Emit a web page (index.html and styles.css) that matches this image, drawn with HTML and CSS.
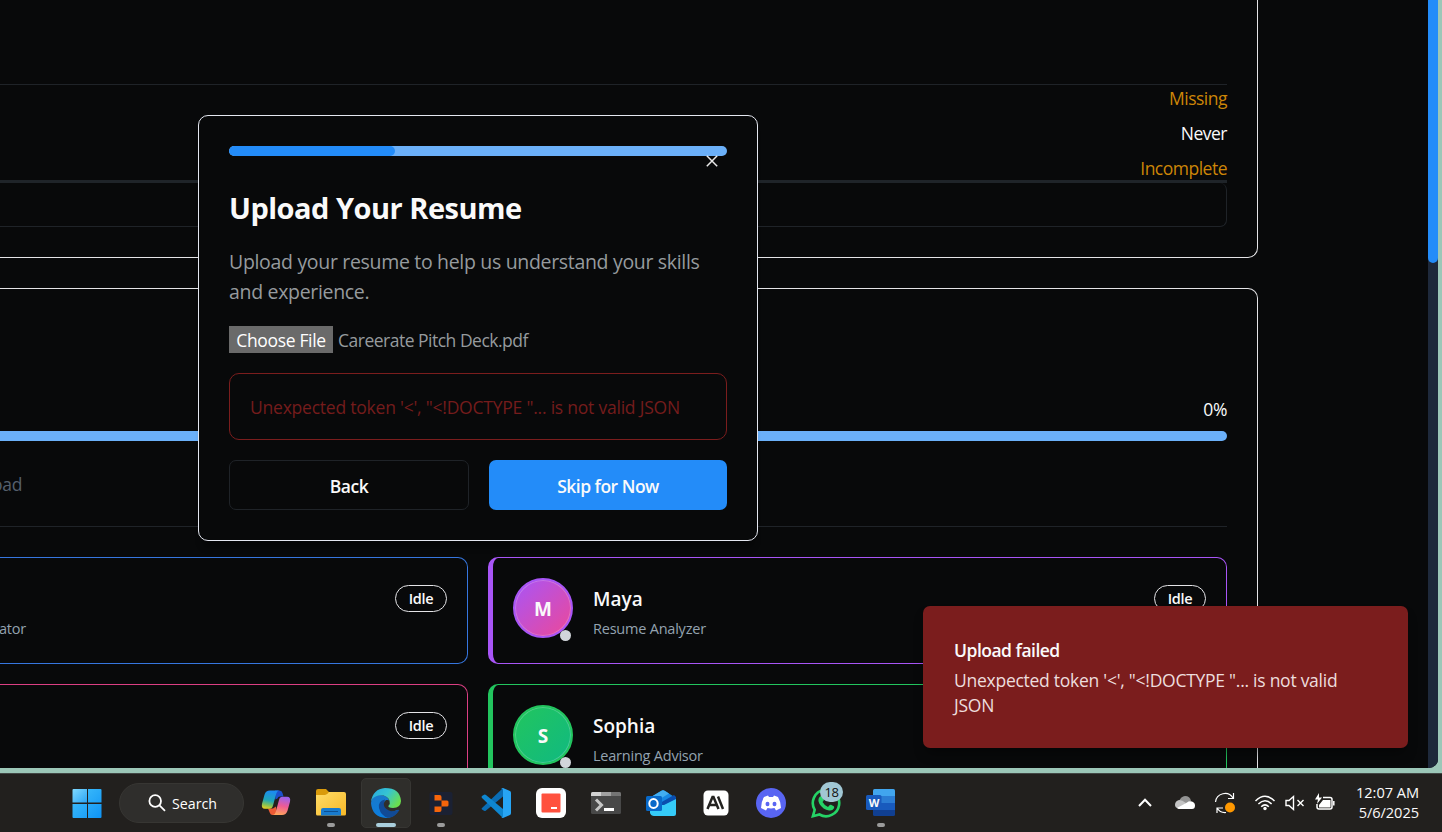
FILE: index.html
```html
<!DOCTYPE html>
<html lang="en">
<head>
<meta charset="utf-8">
<title>Careerate</title>
<link rel="stylesheet" href="styles.css">
</head>
<body>
<div class="desktop">
  <div class="browser">
    <main class="page">
      <section class="card card-profile">
        <div class="rows">
          <div class="row warn missing">Missing</div>
          <div class="row never">Never</div>
          <div class="row warn incomplete">Incomplete</div>
        </div>
        <div class="outline-box"></div>
      </section>
      <section class="card card-agents">
        <div class="percent">0%</div>
        <div class="track"></div>
        <div class="hint"><span>oad</span></div>
        <div class="agents">
          <article class="agent left blue"><p class="cut-role">ator</p><span class="badge">Idle</span></article>
          <article class="agent purple">
            <div class="avatar">M<i class="status"></i></div>
            <div class="who"><h3 class="maya">Maya</h3><p class="ra">Resume Analyzer</p></div>
            <span class="badge">Idle</span>
          </article>
          <article class="agent left pink"><span class="badge">Idle</span></article>
          <article class="agent green">
            <div class="avatar">S<i class="status"></i></div>
            <div class="who"><h3 class="sophia">Sophia</h3><p class="la">Learning Advisor</p></div>
            <span class="badge">Idle</span>
          </article>
        </div>
      </section>
    </main>
    <div class="scrollbar"><div class="thumb"></div></div>

    <div class="modal">
      <div class="progress"><div class="progress-fill"></div></div>
      <svg class="close" viewBox="0 0 20 20"><path d="M4.8 4.8 15.2 15.2M15.2 4.8 4.8 15.2"/></svg>
      <h2><span>Upload Your Resume</span></h2>
      <p class="desc"><span class="d1">Upload your resume to help us understand your skills</span><br><span class="d2">and experience.</span></p>
      <div class="file"><span class="choose">Choose File</span><span class="filename">Careerate Pitch Deck.pdf</span></div>
      <div class="error">Unexpected token '&lt;', "&lt;!DOCTYPE "... is not valid JSON</div>
      <div class="actions"><div class="btn back">Back</div><div class="btn skip">Skip for Now</div></div>
    </div>

    <div class="toast">
      <strong>Upload failed</strong>
      <p>Unexpected token '&lt;', "&lt;!DOCTYPE "... is not valid<br>JSON</p>
    </div>
  </div>

  <footer class="taskbar">
    <div class="apps">
      <div class="cell start"><svg viewBox="0 0 30 30"><defs><linearGradient id="win" x1="0" y1="0" x2="1" y2="1"><stop offset="0" stop-color="#7fd9ff"/><stop offset="1" stop-color="#2ba5f5"/></linearGradient><linearGradient id="win2" x1="0" y1="0" x2="1" y2="1"><stop offset="0" stop-color="#45c3fc"/><stop offset="1" stop-color="#0e93f5"/></linearGradient></defs><path fill="url(#win)" d="M1.5 1h13.5v13.6H.5V2q0-1 1-1z"/><path fill="url(#win2)" d="M16 1h12.5q1 0 1 1v12.6H16zM.5 16H15v14H1.500q-1 0-1-1zM16 16h13.500v13q0 1-1 1H16z"/></svg></div>
      <div class="search"><svg viewBox="0 0 18 18"><circle cx="7.200" cy="7" r="5.800"/><path d="m11.500 11.400 5.500 5.500"/></svg><span>Search</span></div>
      <div class="cell copilot"><svg viewBox="0 0 30 30"><defs><linearGradient id="co1" x1=".3" y1="0" x2=".1" y2="1"><stop offset="0" stop-color="#1c8cf0"/><stop offset=".5" stop-color="#1fa6b8"/><stop offset=".75" stop-color="#7cbf5b"/><stop offset="1" stop-color="#f3d11b"/></linearGradient><linearGradient id="co2" x1=".6" y1="0" x2=".4" y2="1"><stop offset="0" stop-color="#9a62ee"/><stop offset=".5" stop-color="#ee5b94"/><stop offset="1" stop-color="#ffa45b"/></linearGradient></defs><path fill="#1d50cc" d="M14 2.500h4.500q2.500 0 3 2.500l1 3.500H19q-2 0-2.600 2l-2 1z"/><path fill="#ec5a35" d="M7 20.500h5l3-2 1 8.500h-4.500q-2 0-2.600-2z"/><path fill="url(#co1)" d="M9 2.500h9q-2 .3-2.700 3L12 17.500q-.8 3.200-3.500 3.200H4q-4 0-3-5l2.500-9Q4.800 2.500 9 2.500z"/><path fill="url(#co2)" d="M21 27h-9q2-.3 2.700-3L18 12q.8-3.200 3.500-3.200H26q4 0 3 5l-2.500 9Q25.200 27 21 27z"/></svg></div>
      <div class="cell"><svg viewBox="0 0 30 30"><defs><linearGradient id="fo" x1="0" y1="0" x2="1" y2="1"><stop offset="0" stop-color="#ffdc68"/><stop offset="1" stop-color="#f7b827"/></linearGradient></defs><path fill="#d99a0b" d="M2 1h8l3 3h1v5H0V3q0-2 2-2z"/><path fill="url(#fo)" d="M0 7h9q2 0 4-3h15q2 0 2 2v20q0 1.500-1.500 1.500h-27Q0 27.500 0 26z"/><path fill="#187bce" d="M5 27.500V22q0-2 2-2h16q2 0 2 2v5.500z"/><path stroke="#0c4f91" d="M8 23.500h14"/></svg><i class="dot"></i></div>
      <div class="cell active"><svg viewBox="0 0 30 30"><defs><linearGradient id="ed1" x1="0" y1=".1" x2="1" y2=".6"><stop offset="0" stop-color="#27a9e0"/><stop offset=".5" stop-color="#36c4d2"/><stop offset="1" stop-color="#6be04c"/></linearGradient><linearGradient id="ed2" x1="0" y1="0" x2=".3" y2="1"><stop offset="0" stop-color="#1b78c8"/><stop offset="1" stop-color="#0a7ee0"/></linearGradient></defs><path fill="url(#ed2)" d="M0 15Q1 7 9 7q7 .5 9 5l-1 7 11 3Q23 30 15 30 1 29 0 15z"/><path fill="#114a96" d="M14 11.500q-7 1-6 8.500 2 8 9 9.800Q24 29.500 28.300 22.300q-.3-.8-1.300-.3-6 2.500-10.500-.5-5-4-2.500-10z"/><path fill="#2f2e2b" d="M15 12q-3.500 3-1.500 7 3.500 5 10 4l5-2 1.500-3.500q-7 3.500-12 .8-1-.8 0-2.300 1-2-.5-4z"/><path fill="url(#ed1)" d="M0 13.500Q2 1 14 0q15 0 16 13-.3 7-8 7-5.500-.3-4.500-2.300 2-2 1-5Q16.500 7 9 7.200 2 8 0 13.500z"/></svg><i class="dot wide"></i></div>
      <div class="cell"><svg viewBox="0 0 30 30"><rect x="3.500" y="4" width="23" height="23" rx="2" fill="#1b2133"/><path fill="#f5650b" d="M8.500 7h5q2 0 2 2v3.500h-7zM15.500 12.500H21q1.500 0 1.500 1.500v3q0 1.500-1.500 1.500h-5.500zM8.500 18.500h7V22q0 2-2 2h-5z"/></svg><i class="dot"></i></div>
      <div class="cell"><svg viewBox="0 0 30 30"><path fill="#0a6db5" d="m1 20 21-20v8.500L5 22.500q-1 1-2 .2L1 21.500q-1-.8 0-1.500z"/><path fill="#0e86d0" d="M1 10q-1-1 0-2l2-1.300q1-.5 2 .2L22 21v9z"/><path fill="#27a5f5" d="m22 0 7 3q1 .5 1 2v20q0 1.500-1 2l-7 3q-1 0-2-1 2 1 2-1V2q0-2-2-1 1-1 2-1z"/></svg></div>
      <div class="cell"><svg viewBox="0 0 30 30"><rect width="30" height="30" rx="6" fill="#fff"/><rect x="5.500" y="5.500" width="19" height="19" rx="1" fill="#ff513e"/><path stroke="#fff" stroke-width="2" d="M15 20h6"/></svg></div>
      <div class="cell"><svg viewBox="0 0 30 30"><rect y="4" width="30" height="22" rx="1.500" fill="#484848"/><path fill="#d3d3d3" d="M1.500 4H10v4H0V5.500Q0 4 1.500 4z"/><path fill="#a1a1a1" d="M10 4h10v4H10z"/><path fill="#747474" d="M20 4h8.500Q30 4 30 5.500V8H20z"/><path fill="none" stroke="#c6c6c6" stroke-width="3" d="m5 11.500 5.500 5.500L5 22.500"/><path stroke="#fff" stroke-width="3" d="M13 21.500h10"/></svg></div>
      <div class="cell"><svg viewBox="0 0 30 30"><path fill="#1788e4" d="m5 9 10-6q2-1.500 4 0l11 7-15 10L5 17z"/><path fill="#42aef2" d="M5 9 15 3q2-1.500 4 0l4 2.500L9 14z"/><path fill="#0a4eaf" d="m14 15 14-8 2 2v3L18 19h-4z"/><path fill="#35cbf8" d="M4 17h14l12-6v15q0 2-2 2H8q-3 0-4-3z"/><rect y="8" width="16" height="15" rx="1.500" fill="#0869c9"/><ellipse cx="7.500" cy="15.500" rx="4.200" ry="4.500" fill="none" stroke="#fff" stroke-width="2"/></svg></div>
      <div class="cell"><svg viewBox="0 0 30 30"><rect x="2.500" y="2.500" width="25" height="25" rx="4.500" fill="#fff"/><path fill="none" stroke="#242321" stroke-width="2.500" d="m6.500 21 5-12h1l5 12M8.500 17h7M17 8.500 22 21"/></svg></div>
      <div class="cell"><svg viewBox="0 0 30 30"><circle cx="15" cy="15" r="15" fill="#5965f2"/><path fill="#fff" d="m8 9 4-1.500 1 1.500h4l1-1.500L22 9q3 5 3 11l-5 2.500-1.500-2.500q-3.500.8-7 0L10 22.500 5 20Q5 14 8 9z"/><ellipse cx="11.500" cy="16" rx="2" ry="2.300" fill="#5965f2"/><ellipse cx="18.500" cy="16" rx="2" ry="2.300" fill="#5965f2"/></svg></div>
      <div class="cell"><svg viewBox="0 0 30 30"><path fill="none" stroke="#25d366" stroke-width="2.600" d="M1.900 28.200 3.700 21.800A13.200 13.200 0 1 1 8.500 26.500z"/><path fill="#25d366" d="M9 8.500q1.500-1 2.500 0l1.300 3q.3 1-1.300 2.500 2 3.500 5.500 5l1.500-1.800q.7-.8 1.500-.4l2.800 1.400q.7.500.2 2-1.500 2.800-5 2.300Q12 21.500 8.500 16 6 11.500 9 8.500z"/></svg><b class="count">18</b></div>
      <div class="cell"><svg viewBox="0 0 30 30"><path fill="#41a5ee" d="M8.500 1h19q1.500 0 1.500 1.500V8H7V2.500Q7 1 8.500 1z"/><path fill="#2b7cd3" d="M7 8h22v7H7z"/><path fill="#185abd" d="M7 15h22v7H7z"/><path fill="#103f91" d="M7 22h22v4.500q0 1.500-1.500 1.500h-19Q7 28 7 26.500z"/><rect y="7" width="15.500" height="15" rx="1.500" fill="#185abd"/></svg><b class="wletter">W</b><i class="dot"></i></div>
    </div>
    <div class="tray">
      <svg class="ti" viewBox="0 0 20 20"><path d="m4 13 6-6.300 6 6.300" stroke-width="2"/></svg>
      <svg class="ti" viewBox="0 0 20 20"><path stroke="none" fill="#939393" d="M4 8q2-4.500 6-5 5 0 6 5l-7 5z"/><path stroke="none" fill="#c4c4c4" d="M0 12q0-4 4-5 3 0 7 3l-7 5.500Q0 15 0 12z"/><path stroke="none" fill="#fff" d="m2 15 10-5.500q2-2 5-1 3 1 3 4 0 3.500-3 3.500H4q-1 0-2-1z"/></svg>
      <svg class="ti" viewBox="0 0 20 20"><path stroke-width="1.200" d="M.500 9A9.500 9.500 0 0 1 18 5M18.500 0v5.500H13M2 20v-5h6M2 15q3 5 9 4.500"/><circle cx="15" cy="14.500" r="5" fill="#ff9800" stroke="none"/></svg>
      <svg class="ti" viewBox="0 0 20 20"><path stroke-width="1.500" d="M.5 8q9.500-9.500 19 0M3.400 11q6.600-6.500 13.200 0M6.200 13.800q3.800-3.800 7.600 0"/><circle cx="10" cy="15.500" r="1.700" fill="#fff" stroke="none"/></svg>
      <svg class="ti vol" viewBox="0 0 20 20"><path stroke-width="1.400" d="M1 7.500h3L8.500 3.500v13L4 12.500H1zM12.500 7l6 6M18.500 7l-6 6"/></svg>
      <svg class="ti" viewBox="0 0 20 20"><path stroke-width="1.500" d="M8 4.500h7q2 0 2 2V14q0 2-2 2H4q-2 0-2-2v-3M18.800 8v4.500"/><path fill="#fff" stroke="none" d="M8 7h7.500v7.500H4V12zM4 0 0 6.500h3L2 11l5-6.500H4z"/></svg>
      <div class="clock"><span class="time">12:07 AM</span><span class="date">5/6/2025</span></div>
    </div>
  </footer>
</div>
</body>
</html>
```
FILE: styles.css
```css
* { box-sizing: border-box; }
body { margin: 0; background: #9cc7b8; font-family: "Open Sans", "Noto Sans", sans-serif; color: #fafafa; }
h2, h3, p { margin: 0; }
.desktop { width: 1442px; height: 832px; overflow: hidden; display: flex; flex-direction: column; gap: 5px; }
.browser { position: relative; width: 1438px; height: 768px; flex: none; display: flex; background: #08090a; border-bottom-right-radius: 9px; overflow: hidden; }
.page { width: 1428px; display: flex; flex-direction: column; gap: 30px; }
.scrollbar { width: 10px; background: #1e293b; }
.thumb { height: 263px; background: #238cf9; border-radius: 0 0 5px 5px; }

.card { width: 1258px; border: 1px solid #e4e4e7; border-left: 0; flex: none; }
.card-profile { height: 258px; border-top: 0; border-bottom-right-radius: 10px; padding: 84px 30px 0 0; }
.rows { height: 99px; border-top: 1px solid #1f2328; border-bottom: 3px solid #1f2429; padding-top: 1px; display: flex; flex-direction: column; gap: 10px; }
.row { height: 25px; flex: none; line-height: 25px; font-size: 17.5px; text-align: right; letter-spacing: -.5px; }
.warn { color: #cd8607; }
.outline-box { height: 44px; border: 1px solid #1f2328; border-left: 0; border-top: 0; border-radius: 0 7px 7px 0; }
.card-agents { height: 520px; border-top-right-radius: 10px; padding: 108px 30px 0 0; }
.percent { height: 25px; line-height: 24px; font-size: 17.5px; text-align: right; letter-spacing: -.4px; }
.track { height: 10px; margin-top: 9px; border-radius: 0 5px 5px 0; background: #6bb0f9; }
.hint { height: 86px; margin-bottom: 30px; padding-top: 31px; line-height: 25px; font-size: 17.5px; color: #55606d; border-bottom: 1px solid #1f2328; letter-spacing: -.3px; }
.hint span { display: block; margin-left: -8px; }
.agents { display: grid; grid-template-columns: 468px 739px; gap: 20px; }
.agent { height: 107px; display: flex; align-items: flex-start; padding: 20px; border: 1px solid; border-left-width: 5px; border-radius: 10px; }
.agent.left { border-left: 0; border-radius: 0 10px 10px 0; padding-left: 0; }
.blue { border-color: #3676df; }
.pink { border-color: #db3f83; }
.purple { border-color: #a855f7; }
.green { border-color: #22c55e; }
.avatar { position: relative; width: 60px; height: 60px; border-radius: 50%; border: 2px solid #a855f7; display: flex; align-items: center; justify-content: center; font-weight: 700; font-size: 19px; padding-top: 2px; background: linear-gradient(135deg, #a855f7, #ec4899); box-shadow: inset 0 0 0 1px #ffffff38; }
.green .avatar { border-color: #22c55e; background: linear-gradient(135deg, #22c55e, #10b981); }
.status { position: absolute; right: 0; bottom: -5px; width: 11px; height: 11px; border-radius: 50%; background: #d1d5db; }
.who { margin-left: 20px; padding-top: 6px; }
.who h3 { font-weight: 600; font-size: 19px; line-height: 30px; height: 30px; }
.who p, .cut-role { font-size: 14.5px; line-height: 20px; color: #94a3b0; letter-spacing: -.22px; }
.who p { padding-top: 5px; }
.cut-role { padding-top: 41px; margin-left: -1px; }
.badge { margin: 7px 0 0 auto; width: 52px; height: 27px; border: 1px solid #e4e4e7; border-radius: 14px; text-align: center; line-height: 25px; font-size: 14.5px; font-weight: 600; letter-spacing: -.3px; }

.modal { position: absolute; left: 198px; top: 115px; width: 560px; height: 426px; padding: 30px; border: 1px solid #e4e7f0; border-radius: 10px; background: #08090a; box-shadow: 0 10px 6px -4px #0006; }
.progress { height: 10px; border-radius: 5px; background: #6bb0f9; overflow: hidden; }
.progress-fill { width: 33.33%; height: 10px; border-radius: 5px; background: #238cf9; }
.close { position: absolute; right: 35px; top: 35px; width: 20px; height: 20px; fill: none; stroke: #e9e9e9; stroke-width: 1.5; }
.modal h2 { margin-top: 29px; height: 46px; line-height: 45px; font-size: 29px; font-weight: 700; letter-spacing: -.5px; white-space: nowrap; }
.desc { margin-top: 16px; line-height: 30px; font-size: 19.5px; color: #969b9e; letter-spacing: -.32px; white-space: nowrap; }
.file { margin-top: 19px; height: 27px; display: flex; gap: 5px; font-size: 17.5px; line-height: 29px; letter-spacing: -.5px; }
.choose { width: 104px; text-align: center; background: #6a6a6a; color: #fff; letter-spacing: -.35px; }
.filename { color: #969b9e; }
.error { margin-top: 20px; height: 67px; border: 1px solid #7b1d1d; border-radius: 10px; padding-left: 20px; line-height: 67px; font-size: 17.5px; color: #741c1c; white-space: nowrap; letter-spacing: -.22px; }
.actions { margin-top: 20px; display: grid; grid-template-columns: 240px 238px; gap: 20px; }
.btn { height: 50px; line-height: 53px; text-align: center; border-radius: 7px; font-weight: 600; font-size: 17.5px; letter-spacing: -.5px; }
.back { border: 1px solid #1f2328; line-height: 51px; }
.skip { background: #238cf9; }

.toast { position: absolute; left: 923px; top: 606px; width: 485px; height: 142px; border-radius: 7px; padding: 32px 31px; background: #7b1d1d; box-shadow: 0 8px 12px -3px #0006; font-size: 17.5px; line-height: 25px; white-space: nowrap; }
.toast strong { display: block; font-weight: 600; letter-spacing: -.5px; margin-bottom: 5px; }
.toast p { color: #eddddd; letter-spacing: -.26px; }

.taskbar { height: 59px; display: flex; justify-content: space-between; background: #22201e; border-top: 1px solid #424745; }
.apps { display: flex; gap: 5px; padding: 4px 0 0 61px; }
.cell { position: relative; width: 50px; height: 50px; border-radius: 5px; display: flex; align-items: center; justify-content: center; }
.cell svg { width: 30px; height: 30px; }
.start svg { margin-left: 1px; }
.cell.active { background: #2f2e2b; border: 1px solid #373633; }
.dot { position: absolute; left: 21px; top: 45px; width: 8px; height: 4px; border-radius: 2px; background: #9b9b9b; }
.dot.wide { left: 14px; top: 44px; width: 20px; background: #a9cedc; }
.search { margin: 5px 2px 0 3px; width: 125px; height: 40px; border-radius: 20px; background: #2f2e2c; border: 1px solid #373633; display: flex; align-items: center; gap: 6px; padding-left: 28px; font-size: 14.2px; color: #fff; }
.search svg { width: 18px; height: 18px; fill: none; stroke: #fff; stroke-width: 1.800; }
.count { position: absolute; left: 19px; top: 4px; width: 23px; height: 20px; border-radius: 10px; background: #a1c7d4; color: #111; font-size: 13px; font-weight: 400; line-height: 20px; text-align: center; letter-spacing: -.4px; }
.wletter { position: absolute; left: 10px; top: 16px; width: 16px; text-align: center; font-size: 11px; line-height: 17px; }
.tray { display: flex; padding: 19px 23px 0 0; }
.ti { width: 20px; height: 20px; margin-right: 20px; fill: none; stroke: #fff; overflow: visible; }
.ti:nth-of-type(4), .ti.vol { margin-right: 10px; }
.clock { width: 64px; margin-top: -11px; display: flex; flex-direction: column; align-items: flex-end; font-size: 14.6px; line-height: 20px; white-space: nowrap; letter-spacing: -.05px; }
```
